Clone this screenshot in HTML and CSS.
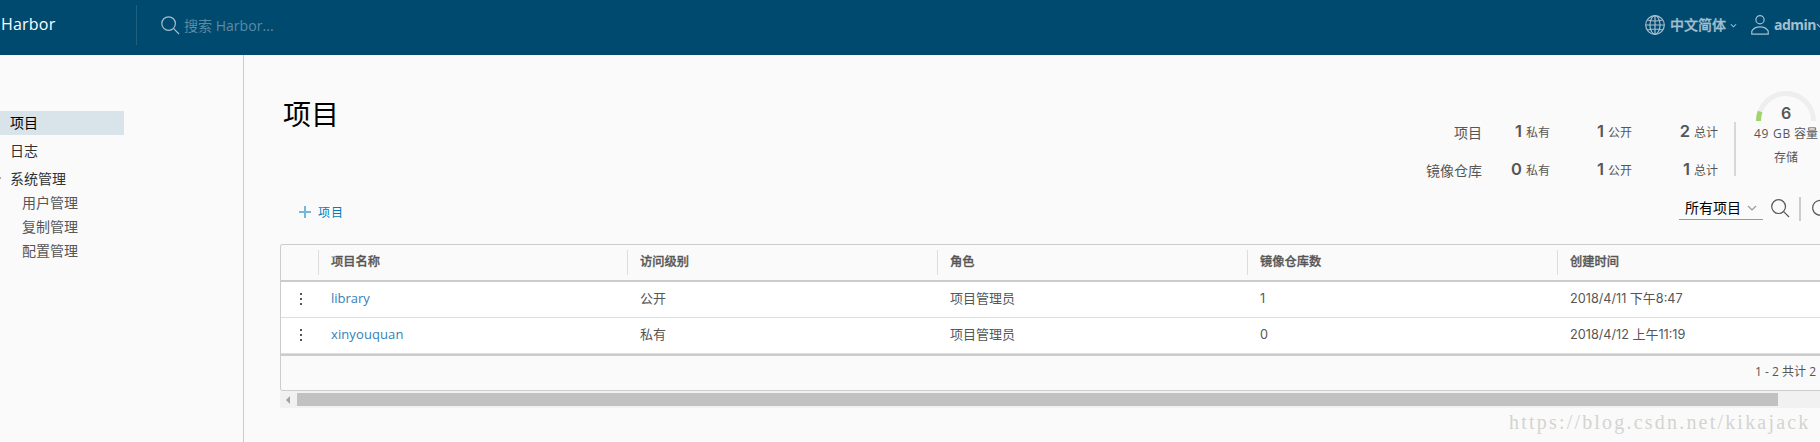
FILE: index.html
```html
<!DOCTYPE html>
<html lang="zh-CN">
<head>
<meta charset="utf-8">
<title>Harbor</title>
<link rel="stylesheet" href="styles.css">
</head>
<body>
<header class="header">
  <div class="brand"><span class="brand-name">Harbor</span></div>
  <div class="search">
    <svg class="icon-search" width="19" height="19" viewBox="0 0 19 19"><circle cx="7.6" cy="7.6" r="6.8"/><path d="M12.7 12.7 18 18"/></svg>
    <span class="search-text">搜索 <span class="search-latin">Harbor...</span></span>
  </div>
  <div class="language">
    <svg class="icon-globe" width="20" height="20" viewBox="0 0 20 20"><circle cx="10" cy="10" r="9.3"/><ellipse cx="10" cy="10" rx="5" ry="9.3"/><path d="M10 .7v18.6M.7 10h18.6M2.5 5q7.500 2 15 0M2.500 15q7.500-2 15 0"/></svg>
    <span class="language-name">中文简体</span>
    <svg class="icon-caret" width="8" height="6" viewBox="0 0 8 6"><path d="M1 1l3 3 3-3"/></svg>
  </div>
  <div class="user">
    <svg class="icon-user" width="18" height="20" viewBox="0 0 18 20"><circle cx="9" cy="4.800" r="4.100"/><path d="M.8 19.200v-3.200C2.500 13.200 5.500 11.800 9 11.800s6.500 1.400 8.200 4.200v3.200z"/></svg>
    <span class="user-name">admin</span>
    <svg class="icon-caret" width="8" height="6" viewBox="0 0 8 6"><path d="M1 1l3 3 3-3"/></svg>
  </div>
</header>
<div class="body">
  <nav class="sidebar">
    <a class="nav-item nav-active">项目</a>
    <a class="nav-item">日志</a>
    <a class="nav-item nav-group">系统管理</a>
    <a class="nav-sub">用户管理</a>
    <a class="nav-sub">复制管理</a>
    <a class="nav-sub">配置管理</a>
  </nav>
  <main class="main">
    <div class="top">
      <h1 class="title">项目</h1>
      <div class="stats">
        <div class="stat-label">项目</div>
        <div class="stat"><b>1</b>私有</div>
        <div class="stat"><b>1</b>公开</div>
        <div class="stat"><b>2</b>总计</div>
        <div class="stat-label">镜像仓库</div>
        <div class="stat"><b>0</b>私有</div>
        <div class="stat"><b>1</b>公开</div>
        <div class="stat"><b>1</b>总计</div>
      </div>
      <div class="stats-divider"></div>
      <div class="storage">
        <svg class="gauge" width="60" height="30" viewBox="0 0 60 30"><path class="gauge-track" d="M2.500 30a27.500 27.500 0 0 1 55 0"/><path class="gauge-value" d="M2.500 30a27.500 27.500 0 0 1 1.500-9.500"/></svg>
        <b class="storage-used">6</b>
        <div class="storage-total"><span class="storage-size">49 GB</span> 容量</div>
        <div class="storage-label">存储</div>
      </div>
    </div>
    <div class="toolbar">
      <a class="new-project"><svg class="icon-plus" width="12" height="12" viewBox="0 0 12 12"><path d="M6 0v12M0 6h12"/></svg>项目</a>
      <div class="filters">
        <div class="select"><span>所有项目</span><svg class="icon-caret" width="10" height="7" viewBox="0 0 10 7"><path d="M1 1l4 4 4-4"/></svg></div>
        <svg class="icon-search" width="19" height="19" viewBox="0 0 19 19"><circle cx="7.600" cy="7.600" r="6.900"/><path d="M12.700 12.700 18 18"/></svg>
        <div class="filter-divider"></div>
        <svg class="icon-refresh" width="18" height="18" viewBox="0 0 18 18"><path d="M15.500 5A7.400 7.400 0 1 0 16.400 10M16 1v4.500h-4.500"/></svg>
      </div>
    </div>
    <div class="grid">
      <div class="row head">
        <div class="cell handle"></div><div class="cell">项目名称</div><div class="cell">访问级别</div><div class="cell">角色</div><div class="cell">镜像仓库数</div><div class="cell">创建时间</div>
      </div>
      <div class="row">
        <div class="cell handle"><svg class="icon-dots" width="2" height="14" viewBox="0 0 2 14"><path d="M0 1h2v2H0zM0 6h2v2H0zM0 11h2v2H0z"/></svg></div><div class="cell"><a class="link">library</a></div><div class="cell">公开</div><div class="cell">项目管理员</div><div class="cell"><span class="num">1</span></div><div class="cell"><span class="num">2018/4/11</span> 下午<span class="num">8:47</span></div>
      </div>
      <div class="row">
        <div class="cell handle"><svg class="icon-dots" width="2" height="14" viewBox="0 0 2 14"><path d="M0 1h2v2H0zM0 6h2v2H0zM0 11h2v2H0z"/></svg></div><div class="cell"><a class="link link-wide">xinyouquan</a></div><div class="cell">私有</div><div class="cell">项目管理员</div><div class="cell"><span class="num">0</span></div><div class="cell"><span class="num">2018/4/12</span> 上午<span class="num">11:19</span></div>
      </div>
      <div class="foot">1 - 2 共计 2</div>
    </div>
    <div class="scrollbar">
      <svg class="scroll-arrow" width="4" height="8" viewBox="0 0 4 8"><path d="M4 0v8L0 4z"/></svg>
      <div class="thumb"></div>
    </div>
    <div class="watermark">https://blog.csdn.net/kikajack</div>
  </main>
</div>
</body>
</html>
```
FILE: styles.css
```css
* { box-sizing: border-box; }
body {
  margin: 0;
  width: 1820px;
  height: 442px;
  overflow: hidden;
  background: #fafafa;
  color: #565656;
  font: 14px/24px "Open Sans", "Noto Sans CJK SC", sans-serif;
  white-space: nowrap;
}
svg { display: block; flex: none; fill: none; stroke: currentColor; stroke-width: 1.2; }

.header { display: flex; height: 55px; background: #004a70; color: #a5bfcd; }
.brand { width: 137px; height: 40px; margin-top: 5px; border-right: 1px solid #1e6080; color: #fff; }
.brand-name { display: block; padding: 7px 0 0 1px; font-size: 16px; letter-spacing: .2px; }
.search { display: flex; flex: 1; padding: 16px 0 0 24px; }
.search-text { margin-left: 4px; line-height: 20px; color: #5b8ba5; }
.search-latin { letter-spacing: .05px; }
.language { display: flex; width: 106px; padding-top: 15px; font-weight: 500; line-height: 20px; -webkit-text-stroke: .3px; }
.language-name { margin: 0 4px 0 5px; }
.language .icon-caret { width: 7px; margin-top: 8px; }
.user { display: flex; width: 69px; padding-top: 15px; font-weight: 700; line-height: 20px; overflow: hidden; }
.user-name { width: 44px; margin-left: 5px; letter-spacing: -.5px; }
.user .icon-caret { margin-top: 8px; }

.body { display: flex; height: 387px; }
.sidebar { width: 244px; padding-top: 56px; border-right: 1px solid #ccc; }
.nav-item { display: block; width: 124px; height: 24px; margin-bottom: 4px; padding-left: 10px; color: #313131; }
.nav-active { background: #d9e4ea; color: #000; }
.nav-group { margin-bottom: 0; background: linear-gradient(#aaa, #aaa) 0 10px / 1px 2px no-repeat; }
.nav-sub { display: block; padding-left: 22px; }
.main { width: 1576px; padding-left: 36px; }

.top { display: flex; height: 133px; }
.title { width: 1112px; margin: 39px 0 0 3px; font-size: 28px; line-height: 40px; font-weight: 400; color: #000; }
.stats { display: grid; grid-template-columns: 87px 68px 82px 86px; grid-template-rows: 38px 38px; width: 323px; padding-top: 59px; line-height: 38px; text-align: right; }
.stat { font-size: 12px; }
.stat b { margin-right: 4px; font: 600 16.500px/20px Inter, sans-serif; }
.stats-divider { width: 2px; height: 54px; margin: 67px 0 0 16px; background: #d8d8d8; }
.storage { display: flex; flex-direction: column; align-items: center; width: 66px; margin: 36px 0 0 17px; font-size: 12px; }
.gauge { stroke-width: 5; }
.gauge-track { stroke: #eee; }
.gauge-value { stroke: #a2d46c; }
.storage-used { height: 20px; margin-top: -18px; font: 600 16px/20px Inter, sans-serif; }
.storage-total { margin-top: -1px; }
.storage-size { letter-spacing: .7px; }

.toolbar { display: flex; justify-content: space-between; height: 56px; }
.new-project { display: flex; padding: 13px 0 0 19px; color: #007cbb; font-size: 12px; letter-spacing: 1px; }
.icon-plus { margin: 5px 7px 0 0; stroke: #75b8da; stroke-width: 2; }
.filters { display: flex; width: 141px; padding-top: 8px; }
.select { display: flex; flex: none; width: 84px; height: 24px; padding-left: 6px; border-bottom: 1px solid #9a9a9a; color: #000; }
.select .icon-caret { margin: 9px 0 0 6px; color: #9a9a9a; }
.filters .icon-search { margin: 3px 0 0 8px; }
.filter-divider { flex: none; width: 2px; height: 24px; margin: 1px 10px 0 9px; background: #ccc; }
.icon-refresh { margin-top: 3px; }

.grid { height: 147px; border: 1px solid #ccc; border-right: 0; border-radius: 3px 0 0 3px; font-size: 13px; overflow: hidden; }
.row { display: grid; grid-template-columns: 37px 309px 310px 310px 310px 263px; height: 36px; border-bottom: 1px solid #ddd; background: #fff; }
.head { height: 37px; padding-top: 5px; border-bottom: 2px solid #ccc; background: #fafafa; font-size: 12.25px; font-weight: 500; -webkit-text-stroke: .3px; }
.cell { padding-left: 13px; line-height: 32px; }
.head .cell { height: 25px; line-height: 23px; border-left: 1px solid #ddd; padding-left: 12px; }
.head .handle { border: 0; }
.handle { padding: 10px 0 0 19px; }
.icon-dots { fill: #565656; stroke: none; }
.link { color: #3282b8; }
.link-wide { letter-spacing: .1px; }
.num { font-family: Inter, sans-serif; font-size: 12.7px; }
.foot { height: 36px; padding-right: 4px; border-top: 2px solid #ccc; background: #fafafa; font-size: 12px; line-height: 32px; text-align: right; }

.scrollbar { display: flex; height: 17px; padding: 2px 0 0 6px; background: #f1f1f1; }
.scroll-arrow { margin-top: 3px; fill: #a3a3a3; stroke: none; }
.thumb { width: 1481px; height: 13px; margin-left: 7px; background: #c1c1c1; }
.watermark { padding-top: 2px; margin-left: 1229px; font: 20px/24px "Liberation Serif", serif; letter-spacing: 2.2px; color: #d4d4d0; }
```
